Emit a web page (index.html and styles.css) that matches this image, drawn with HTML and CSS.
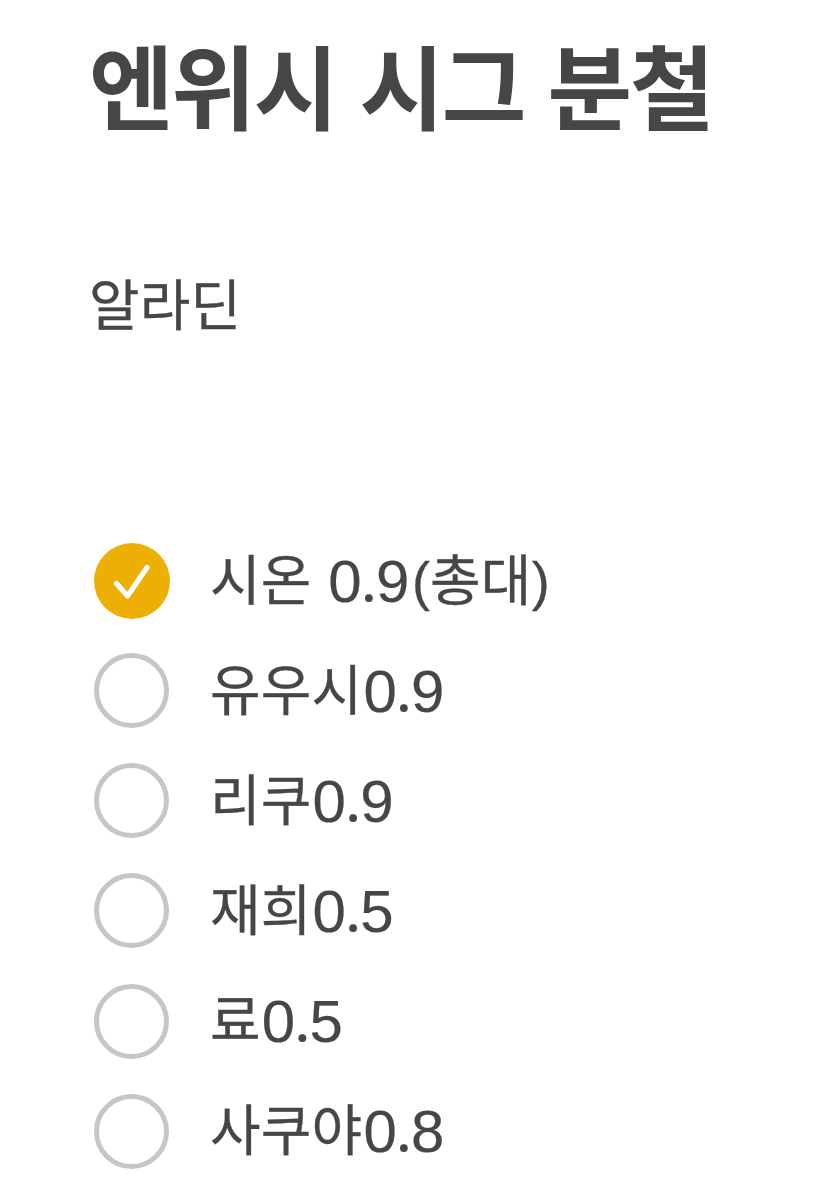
FILE: index.html
```html
<!DOCTYPE html>
<html lang="ko">
<head>
<meta charset="utf-8">
<title>엔위시 시그 분철</title>
<link rel="stylesheet" href="styles.css">
</head>
<body>
<main class="note">
<h1 class="title">엔위시 시그 분철</h1>
<p class="store">알라딘</p>
<ul class="list">
<li class="item"><svg class="mark" viewBox="0 0 76 76"><circle cx="38" cy="38" r="38" fill="#eeaf05"/><path d="M22.5 40.5 33.5 53 53 24.5" fill="none" stroke="#fff" stroke-width="5.2" stroke-linecap="round" stroke-linejoin="round"/></svg><span class="label">시온 <span class="num">0<span class="dot">.</span>9</span><span class="paren open">(</span>총대<span class="paren">)</span></span></li>
<li class="item"><span class="mark ring"></span><span class="label">유우시<span class="num">0<span class="dot">.</span>9</span></span></li>
<li class="item"><span class="mark ring"></span><span class="label">리쿠<span class="num">0<span class="dot">.</span>9</span></span></li>
<li class="item"><span class="mark ring"></span><span class="label">재희<span class="num">0<span class="dot">.</span>5</span></span></li>
<li class="item"><span class="mark ring"></span><span class="label">료<span class="num">0<span class="dot">.</span>5</span></span></li>
<li class="item"><span class="mark ring"></span><span class="label">사쿠야<span class="num">0<span class="dot">.</span>8</span></span></li>
</ul>
</main>
</body>
</html>
```
FILE: styles.css
```css
* { box-sizing: border-box; margin: 0; padding: 0; }
body { background: #fff; color: #464646; font-family: "Noto Sans CJK KR", sans-serif; }
.note { height: 1200px; padding: 23px 89px 0; overflow: hidden; }
.title { height: 120px; font-size: 92px; line-height: 120px; font-weight: 700; letter-spacing: -2.3px; white-space: nowrap; }
.store { height: 80px; margin-top: 118px; font-size: 55px; line-height: 80px; letter-spacing: 0.2px; -webkit-text-stroke: 0.3px #464646; }
.list { margin-top: 184.6px; padding-left: 5px; list-style: none; }
.item { display: flex; align-items: center; gap: 40px; height: 110.1px; }
.mark { width: 76px; height: 76px; flex: none; }
.ring { width: 75px; height: 75px; margin-right: 1px; border: 5px solid #c6c6c6; border-radius: 50%; }
.label { height: 80px; margin-top: -10px; font-size: 55px; line-height: 80px; letter-spacing: 0.2px; white-space: nowrap; -webkit-text-stroke: 0.3px #464646; }
.num, .paren { font-family: "Liberation Sans", Arial, sans-serif; line-height: 1; }
.num { margin-left: 1px; font-size: 60px; letter-spacing: -1.2px; vertical-align: -2px; -webkit-text-stroke: 0.2px #464646; }
.dot { font-family: Inter, sans-serif; font-size: 58px; line-height: 1; }
.paren { font-size: 54px; vertical-align: 0; letter-spacing: 0; -webkit-text-stroke: 0.3px #464646; }
.open { margin-left: 4px; }
```
